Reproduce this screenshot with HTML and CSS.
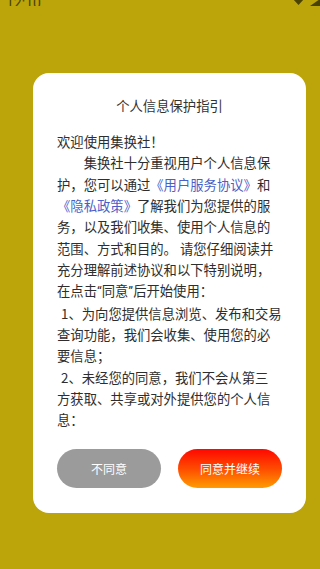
FILE: index.html
```html
<!DOCTYPE html>
<html lang="zh-CN">
<head>
<meta charset="utf-8">
<title>个人信息保护指引</title>
<link rel="stylesheet" href="styles.css">
</head>
<body>
<div class="screen">
  <div class="status">
    <span class="time">12:10</span>
    <svg class="status-icons" width="30" height="7" viewBox="0 0 30 7">
      <path d="M3 0 H14 L8.5 6 Z" fill="#4a4300"/>
      <path d="M30 0 V7 H20 Z" fill="#4a4300"/>
    </svg>
  </div>
  <div class="card">
    <h1 class="title">个人信息保护指引</h1>
    <div class="body">
      <p>欢迎使用集换社！</p>
      <p class="indent">集换社十分重视用户个人信息保护，您可以通过<a class="link">《用户服务协议》</a>和<a class="link">《隐私政策》</a>了解我们为您提供的服务，以及我们收集、使用个人信息的范围、方式和目的。 请您仔细阅读并充分理解前述协议和以下特别说明，在点击<span class="q">“</span>同意<span class="q">”</span>后开始使用：</p>
      <p class="item">1、为向您提供信息浏览、发布和交易查询功能，我们会收集、使用您的必要信息；</p>
      <p class="item">2、未经您的同意，我们不会从第三<br>方获取、共享或对外提供您的个人信<br>息：</p>
    </div>
    <div class="actions">
      <button class="btn btn-decline">不同意</button>
      <button class="btn btn-accept">同意并继续</button>
    </div>
  </div>
</div>
</body>
</html>
```
FILE: styles.css
```css
html, body {
  margin: 0;
  padding: 0;
}
body {
  background: #bba50a;
  font-family: "Noto Sans CJK SC", "Noto Sans", sans-serif;
  width: 320px;
  height: 569px;
  overflow: hidden;
}
.screen {
  display: flex;
  flex-direction: column;
}
.status {
  height: 6px;
  overflow: hidden;
  display: flex;
  justify-content: space-between;
  align-items: flex-start;
  padding-left: 6px;
}
.time {
  margin-top: -4px;
  font-family: Roboto, "Liberation Sans", sans-serif;
  font-size: 14px;
  line-height: 14px;
  color: #4a4300;
}
.status-icons {
  display: block;
  margin-top: -1px;
}
.card {
  margin: 67px 0 0 33px;
  width: 273px;
  box-sizing: border-box;
  background: #ffffff;
  border-radius: 16px;
  padding: 22px 24px 25px;
  display: flex;
  flex-direction: column;
}
.title {
  margin: 0;
  font-size: 13.33px;
  line-height: 21.33px;
  font-weight: normal;
  text-align: center;
  color: #333333;
}
.body {
  margin-top: 14.6px;
  font-size: 13.33px;
  line-height: 21.33px;
  color: #2e2e2e;
}
.body p {
  margin: 0;
}
.indent {
  text-indent: 2em;
}
.item {
  text-indent: 4px;
}
.q {
  font-family: Roboto, "Liberation Sans", sans-serif;
}
.link {
  color: #4a5fc8;
}
.actions {
  margin-top: 18px;
  display: flex;
  justify-content: space-between;
}
.btn {
  width: 104px;
  height: 39px;
  border: none;
  border-radius: 20px;
  color: #ffffff;
  font-family: "Noto Sans CJK SC", "Noto Sans", sans-serif;
  font-size: 12px;
  padding: 0;
}
.btn-decline {
  background: #9b9b9b;
}
.btn-accept {
  background: linear-gradient(180deg, #ff0800 0%, #ff4a00 50%, #ff9c00 100%);
}
```
